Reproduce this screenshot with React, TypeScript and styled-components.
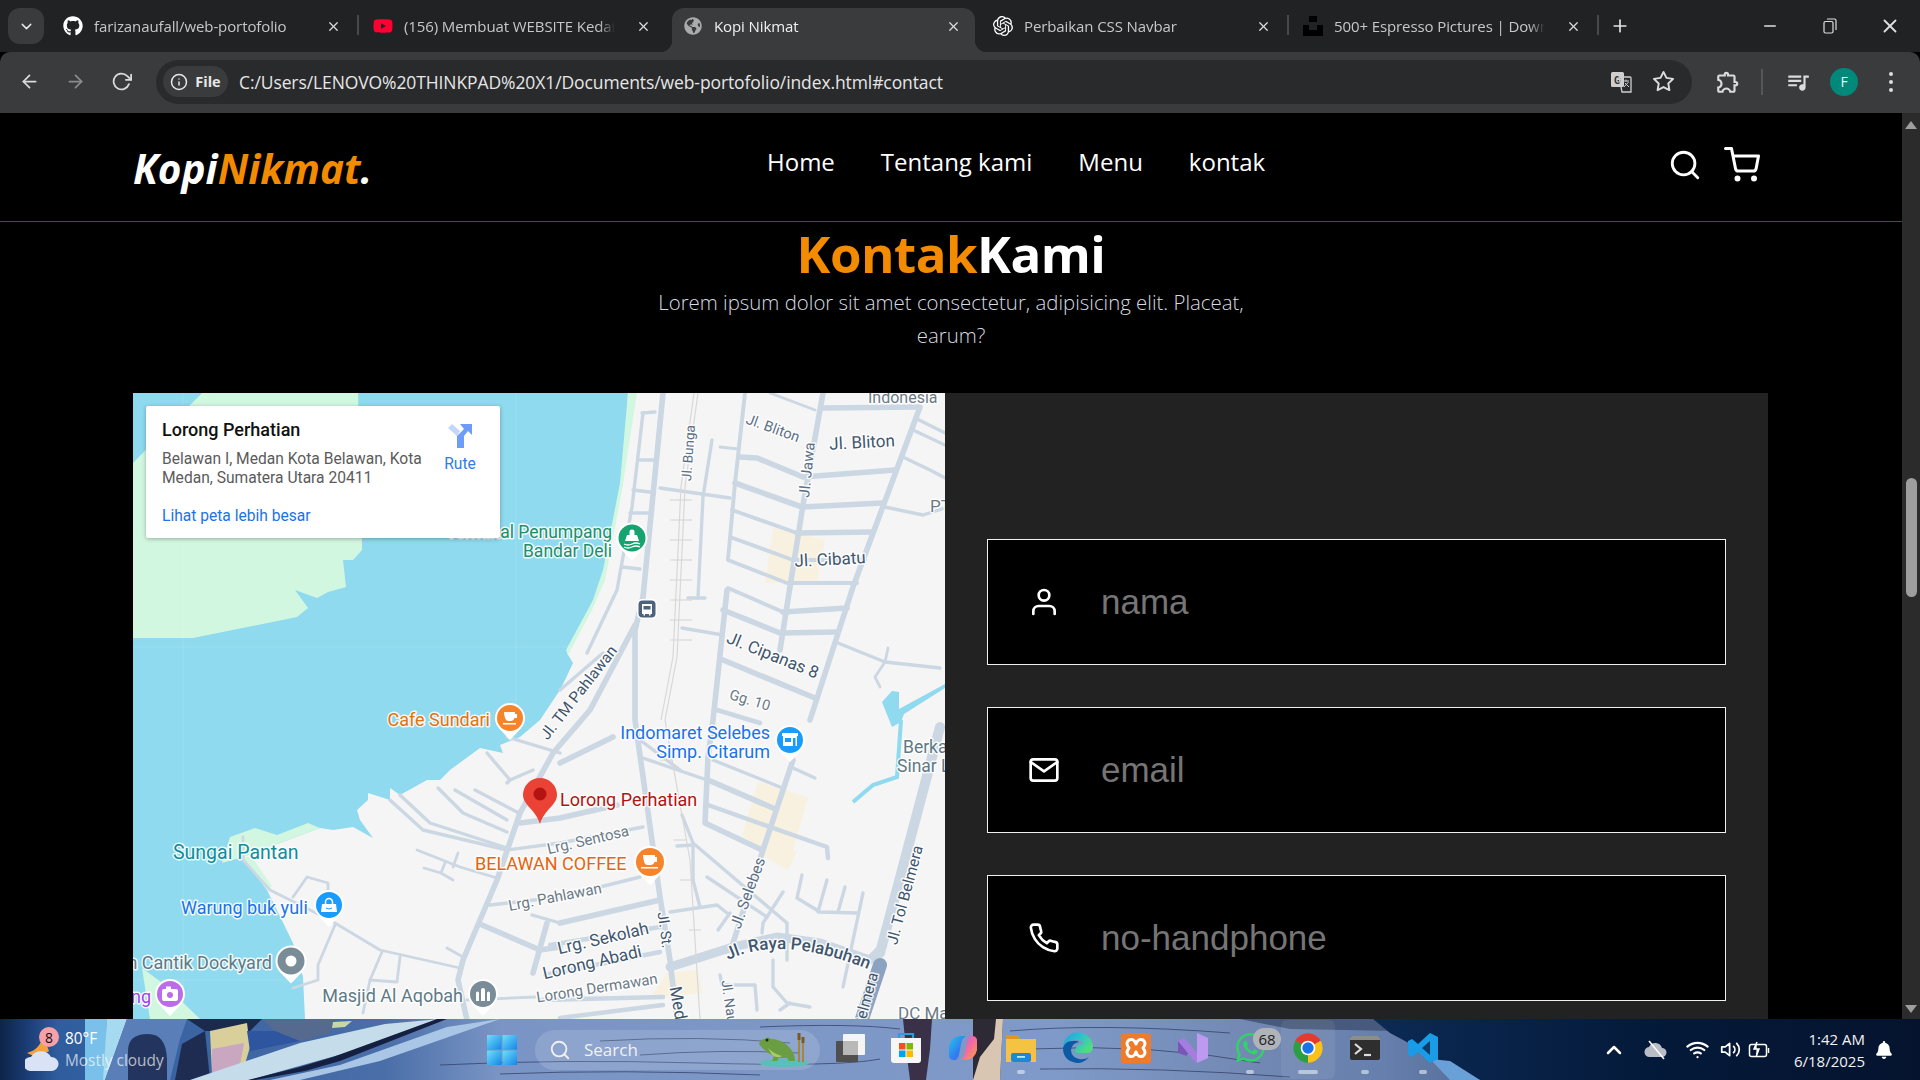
import React from "react";
import styled, { createGlobalStyle } from "styled-components";
import { FiArrowLeft, FiArrowRight, FiRotateCw, FiInfo, FiStar, FiSearch, FiShoppingCart, FiUser, FiMail, FiPhone, FiChevronDown, FiChevronUp, FiWifi, FiVolume2, FiX, FiPlus, FiMinus } from "react-icons/fi";
import { FaGithub, FaYoutube, FaGlobeAmericas, FaWhatsapp, FaBell } from "react-icons/fa";
import { SiOpenai } from "react-icons/si";
import { MdQueueMusic, MdOutlineExtension } from "react-icons/md";

const Global = createGlobalStyle`
  html, body { margin: 0; padding: 0; background: #000; overflow: hidden; }
  * { box-sizing: border-box; }
`;

const Screen = styled.div`
  width: 1920px; height: 1080px; display: flex; flex-direction: column; overflow: hidden;
  font-family: "Open Sans", "Liberation Sans", sans-serif;
`;

/* ---------- browser tab strip ---------- */
const TabStrip = styled.div`
  height: 52px; flex: none; background: #202223; display: flex; align-items: flex-start; padding: 8px 0 0 8px;
`;
const TabSearch = styled.div`
  width: 36px; height: 36px; margin-right: 6px; border-radius: 12px; background: #3a3b3c; color: #e8e8e8;
  display: flex; align-items: center; justify-content: center; font-size: 17px;
`;
const Tab = styled.div<{ $active?: boolean; $sep?: boolean }>`
  position: relative; width: 310px; height: 44px; flex: none; display: flex; align-items: center;
  padding: 0 19px 8px 13px; color: ${p => (p.$active ? "#f0f0f0" : "#c7c7c7")};
  ${p => p.$active && `
    background: #3a3b3c; border-radius: 12px 12px 0 0; width: 303px; margin: 0 5px 0 2px; padding: 0 14px 8px 11px;
    &::before, &::after { content: ""; position: absolute; bottom: 0; width: 12px; height: 12px; }
    &::before { left: -12px; background: radial-gradient(circle at 0 0, #202223 12px, #3a3b3c 12.5px); }
    &::after { right: -12px; background: radial-gradient(circle at 100% 0, #202223 12px, #3a3b3c 12.5px); }
  `}
  ${p => p.$sep && `
    &::after { content: ""; position: absolute; right: 1px; top: 7px; width: 2px; height: 20px; background: #47494a; }
  `}
`;
const TabIcon = styled.span`
  width: 20px; height: 20px; flex: none; display: flex; align-items: center; justify-content: center; margin-right: 11px; font-size: 20px;
`;
const TabTitle = styled.span`
  flex: 1; min-width: 0; overflow: hidden; white-space: nowrap; font-size: 15px; letter-spacing: -0.1px;
  mask-image: linear-gradient(to right, #000 calc(100% - 16px), transparent);
  margin-right: 20px;
`;
const TabClose = styled.span`
  width: 16px; flex: none; display: flex; justify-content: center; font-size: 15px; color: #dcdcdc;
`;
const NewTab = styled.div`
  width: 40px; height: 36px; display: flex; align-items: center; justify-content: center; color: #e4e4e4; font-size: 20px;
`;
const WindowControls = styled.div`
  margin-left: auto; display: flex; align-self: flex-start; color: #dfdfdf; margin-top: 3px;
`;
const WinButton = styled.div`
  width: 60px; height: 30px; display: flex; align-items: center; justify-content: center; font-size: 18px;
`;

/* ---------- browser toolbar ---------- */
const Toolbar = styled.div`
  height: 61px; flex: none; background: #3a3b3c; border-radius: 10px 10px 0 0; display: flex; align-items: center; padding: 0 0 2px 6px;
`;
const NavButton = styled.div<{ $dim?: boolean }>`
  width: 46px; display: flex; justify-content: center; font-size: 21px; color: ${p => (p.$dim ? "#8b8c8d" : "#dadada")};
`;
const Omnibox = styled.div`
  width: 1536px; height: 44px; margin: 0 16px 0 12px; border-radius: 22px; background: #292a2b; display: flex; align-items: center; padding: 0 8px 0 7px;
`;
const Chip = styled.div`
  width: 65px; height: 31px; border-radius: 16px; background: #3a3b3c; display: flex; align-items: center; justify-content: center; gap: 7px; color: #e8e8e8;
  font-size: 14.5px; font-weight: 700;
`;
const Url = styled.div`
  margin-left: 11px; font-size: 17.5px; color: #e6e6e6; white-space: nowrap; flex: 1; letter-spacing: -0.1px;
`;
const ToolIcon = styled.div<{ $w: number; $size?: number }>`
  width: ${p => p.$w}px; flex: none; display: flex; justify-content: center; align-items: center; color: #dcdcdc; font-size: ${p => p.$size ?? 22}px;
`;
const ToolSep = styled.div`
  width: 2px; height: 26px; background: #55575a; flex: none; margin: 0 17px 0 13px;
`;
const Avatar = styled.div`
  width: 28px; height: 28px; border-radius: 50%; background: #00897b; color: #e6f5f3; font-size: 14px; display: flex; align-items: center; justify-content: center;
`;

/* ---------- page ---------- */
const Viewport = styled.div`
  height: 906px; flex: none; display: flex; overflow: hidden;
`;
const Page = styled.div`
  width: 1902px; flex: none; background: #000; overflow: hidden;
`;
const Scrollbar = styled.div`
  flex: 1; background: #2b2b2b; display: flex; flex-direction: column; align-items: center; justify-content: space-between; padding: 8px 0 6px; position: relative;
`;
const Thumb = styled.div`
  position: absolute; top: 365px; left: 4px; width: 11px; height: 119px; border-radius: 6px; background: #9e9e9e;
`;
const Arrow = styled.div<{ $up?: boolean }>`
  width: 0; height: 0; border-left: 6px solid transparent; border-right: 6px solid transparent;
  ${p => (p.$up ? "border-bottom: 8px solid #9e9e9e;" : "border-top: 8px solid #9e9e9e;")}
`;

const Nav = styled.nav`
  height: 109px; border-bottom: 1px solid #6f4504; display: flex; align-items: flex-start; justify-content: space-between; padding: 0 142px 0 133px;
`;
const Logo = styled.div`
  font-size: 40.5px; font-weight: 700; font-style: italic; color: #fff; line-height: 54px; margin: 29px -8px 0 0;
`;
const Orange = styled.span`
  color: #f38b00;
`;
const NavLinks = styled.div`
  display: flex; gap: 46px; margin-top: 32px;
`;
const NavLink = styled.a`
  color: #fff; font-size: 24px; line-height: 34px; font-weight: 500; text-decoration: none;
`;
const NavIcons = styled.div`
  display: flex; align-items: center; gap: 22px; margin-top: 34px; color: #fff; font-size: 36px;
`;

const Heading = styled.h2`
  margin: 0; text-align: center; font-size: 51px; line-height: 62px; font-weight: 700; color: #fff; letter-spacing: -0.5px;
`;
const Subtitle = styled.p`
  margin: 2px auto 0; width: 620px; text-align: center; font-size: 20.4px; line-height: 33px; font-weight: 300; color: #d5dbe0;
`;
const Row = styled.section`
  display: flex; margin: 41px 0 0 133px; width: 1635px; height: 700px;
`;
const MapPane = styled.div`
  position: relative; width: 812px; height: 626px; flex: none; background: #8fdaee; overflow: hidden;
`;
const MapSvg = styled.svg`
  display: block; width: 812px; height: 626px;
`;
const InfoCard = styled.div`
  position: absolute; left: 13px; top: 13px; width: 354px; height: 132px; background: #fff; border-radius: 2px; box-shadow: 0 1px 4px rgba(0,0,0,.3);
  padding: 12px 0 0 16px; font-family: Roboto, "Liberation Sans", sans-serif; display: flex;
`;
const InfoMain = styled.div`
  width: 268px;
`;
const InfoTitle = styled.div`
  font-size: 18px; font-weight: 500; color: #111; line-height: 24px;
`;
const InfoAddress = styled.div`
  margin-top: 8px; font-size: 15.6px; line-height: 19px; color: #5b5b5b;
`;
const InfoLink = styled.a`
  display: block; margin-top: 18px; font-size: 15.6px; line-height: 20px; color: #1a73e8;
`;
const Directions = styled.div`
  display: flex; flex-direction: column; align-items: center; width: 60px; margin-top: 5px; color: #2b7de9; font-size: 15.6px; gap: 6px;
`;
const Panel = styled.div`
  width: 823px; flex: none; background: #222; display: flex; flex-direction: column; gap: 42px; padding: 146px 42px 0;
`;
const InputBox = styled.div`
  height: 126px; flex: none; background: #000; border: 1px solid #f0f0f0; display: flex; align-items: center; padding-left: 40px; color: #fff; font-size: 32px;
`;
const InputIcon = styled.span`
  width: 32px; height: 32px; display: flex; margin-right: 41px;
`;
const Placeholder = styled.span`
  font-family: "Liberation Sans", Arial, sans-serif; font-size: 35px; color: #757575;
`;

const LabelText = styled.text<{ $c: string; $s: number; $w?: number }>`
  font-family: Roboto, "Liberation Sans", sans-serif; fill: ${p => p.$c}; font-size: ${p => p.$s}px; font-weight: ${p => p.$w ?? 400};
  paint-order: stroke; stroke: #fff; stroke-opacity: .85; stroke-width: 3px; stroke-linejoin: round;
`;

/* ---------- taskbar ---------- */
const Taskbar = styled.footer`
  position: relative; height: 61px; flex: none; display: flex; align-items: center; overflow: hidden; color: #fff;
  font-family: "Open Sans", "Liberation Sans", sans-serif;
`;
const Wallpaper = styled.svg`
  position: absolute; inset: 0; width: 1920px; height: 61px;
`;
const Weather = styled.div`
  position: relative; width: 487px; flex: none; height: 100%; display: flex; align-items: center; padding-left: 25px;
`;
const WeatherGlyph = styled.svg`
  width: 38px; height: 44px; flex: none; margin-top: 6px;
`;
const Badge = styled.span<{ $bg: string }>`
  position: absolute; display: flex; align-items: center; justify-content: center; border-radius: 50%; color: #111; background: ${p => p.$bg};
  font-size: 14px; width: 20px; height: 20px;
`;
const WeatherBadge = styled(Badge)`
  left: 39px; top: 8px;
`;
const WeatherText = styled.div`
  margin-left: 2px; font-size: 15.4px; line-height: 22px;
`;
const WeatherSub = styled.div`
  color: rgba(255,255,255,.68);
`;
const Center = styled.div`
  position: relative; display: flex; align-items: center; flex: none;
`;
const StartIcon = styled.svg`
  width: 30px; height: 30px; margin-right: 18px; flex: none;
`;
const SearchPill = styled.div`
  position: relative; width: 285px; height: 40px; flex: none; border-radius: 20px; background: rgba(255,255,255,.14); display: flex; align-items: center; padding-left: 14px; gap: 13px; font-size: 17px; color: #f1f1f1;
`;
const Frog = styled.svg`
  position: absolute; right: 8px; top: 0; width: 54px; height: 40px;
`;
const Slot = styled.div`
  position: relative; width: 57.4px; height: 61px; flex: none; display: flex; align-items: center; justify-content: center;
`;
const SlotIcon = styled.svg`
  width: 32px; height: 32px; position: relative; margin-top: -4px;
`;
const WhatsappWrap = styled.span`
  display: flex; margin-top: -4px;
`;
const RunDot = styled.span<{ $wide?: boolean }>`
  position: absolute; bottom: 6px; left: 50%; transform: translateX(-50%); height: 4px; border-radius: 2px;
  width: ${p => (p.$wide ? 20 : 8)}px; background: rgba(225,235,245,.62);
`;
const ActiveBack = styled.span`
  position: absolute; inset: 1px 2px; border-radius: 6px; background: rgba(255,255,255,.07);
`;
const CountBadge = styled(Badge)`
  right: -2px; top: 9px; width: 28px; height: 22px; border-radius: 11px; font-size: 15px; color: #222;
`;
const Tray = styled.div`
  position: relative; margin-left: auto; display: flex; align-items: center; height: 100%; padding-right: 20px;
`;
const TrayIcon = styled.span<{ $w: number }>`
  width: ${p => p.$w}px; display: flex; justify-content: center; font-size: 21px; color: #fff;
`;
const Clock = styled.div`
  text-align: right; font-size: 15px; line-height: 22px; margin-left: 16px; width: 78px; padding-right: 3px; color: #f2f2f2; white-space: nowrap;
`;

/* ---------- map data ---------- */
const ROADS: [number, string][] = [
  [5, "663,393 643,597 635,630 635,720 660,897 670,960 677,1020"],
  [3, "643,413 632,507 617,590 587,653"],
  [3, "642,413 655,412"], [3, "640,460 653,460"], [3, "633,490 650,492"], [3, "630,513 648,513"], [3, "622,567 640,569"],
  [3, "660,488 730,498"], [3, "712,440 703,497 698,597"], [3, "688,598 705,598"], [2.5, "720,447 738,449"],
  [5, "823,393 803,505 780,650"], [5, "920,407 853,587 810,720"], [5, "823,408 918,407"],
  [5, "740,457 757,458 803,477 895,470"], [5, "735,483 802,507 883,503"],
  [3.5, "745,393 735,483 728,560 787,583 857,583"], [3.5, "732,510 797,533"], [5, "797,533 872,532"], [3.5, "730,537 793,560"], [3.5, "795,560 865,560"],
  [3.5, "728,588 783,612"], [5, "783,612 847,608"], [5, "723,610 780,633 838,632"], [5, "727,590 713,720 708,757 705,823 762,850"], [5, "723,660 815,698"],
  [4, "717,710 760,723"], [3, "682,628 723,635"], [3, "915,418 945,433"], [3, "913,430 945,445"], [3, "905,458 930,470 945,478"],
  [3, "885,507 923,515 945,508"], [3, "838,643 885,662 940,668"], [2.5, "888,648 885,662 875,677 880,687"], [2.5, "770,393 815,410"],
  [9, "940,727 880,953"], [5, "793,760 763,850 733,943"], [5, "560,763 613,737"],
  [5, "708,780 773,808"], [4, "708,805 827,847 828,858"], [3, "640,757 707,780"], [3, "713,760 780,787"], [3, "793,768 815,778"],
  [3, "682,815 693,843 787,923 787,960"], [3, "693,843 693,880 700,907"], [3, "677,846 693,845"], [3, "707,877 767,917"], [3, "783,892 763,923 762,933"],
  [3, "727,913 717,905 670,912"], [3, "730,913 718,930"], [8, "670,967 733,947 777,937 820,943 870,960 880,950"],
  [3, "802,875 797,898 820,912 857,913"], [3, "827,880 818,912"], [3, "845,887 838,912"], [3, "863,893 843,987"],
  [3, "773,960 773,987 787,1003 810,1007"], [3, "780,1010 790,1003"], [3, "720,975 722,985 755,985 757,1010"],
  [5, "520,823 560,818 617,805"], [3, "390,800 423,830 507,850 560,843 643,827"], [3, "400,795 430,823 507,848"], [3, "438,788 463,813 507,832"], [3, "455,790 507,820"], [3, "475,790 517,812"],
  [5, "520,813 553,753 590,710 635,625"], [5, "520,813 497,880 463,960 458,980 467,1020"], [3, "487,753 510,780 507,783"], [3, "510,780 533,770"], [3, "507,737 560,753"], [3, "603,653 560,690"], [3, "640,740 680,770"],
  [5, "482,925 540,950 560,947"], [5, "547,923 533,973"], [3, "532,915 560,923"], [3, "490,905 560,897 640,877"], [5, "560,923 660,900"], [4, "550,945 660,927"], [4, "545,975 660,952"], [4, "540,1000 663,997"], [4, "560,1018 663,1005"],
  [2.5, "243,837 243,860 270,890 330,920 380,950 460,968"], [2.5, "293,897 307,877 328,883 328,890"], [2.5, "335,925 318,965 318,980 293,988"], [2.5, "382,952 370,980 397,982 400,957"],
  [2.5, "417,850 460,867 497,878"], [2.5, "458,853 453,867"], [2.5, "445,863 441,873 424,868"], [2.5, "441,873 453,880"], [2.5, "447,948 463,957"], [2.5, "370,980 363,1013"], [2.5, "467,1000 535,997"],
];

const label = (x: number, y: number, rot = 0) => (rot ? `rotate(${rot} ${x} ${y})` : undefined);
const ROAD_DARK = "#3f566e";
const ROAD_MID = "#5c6f85";
const ROAD_GRAY = "#6b7a86";

const MapPin = ({ x, y, c, r = 13, children }: { x: number; y: number; c: string; r?: number; children?: React.ReactNode }) => (
  <g>
    <circle cx={x} cy={y} r={r + 2} fill="#fff" />
    <path d={`M${x - r * 0.8} ${y + r * 0.75} L${x} ${y + r + 8} L${x + r * 0.8} ${y + r * 0.75}Z`} fill="#fff" stroke="#fff" strokeLinejoin="round" strokeWidth="1.5" />
    <circle cx={x} cy={y} r={r} fill={c} />
    {children}
  </g>
);

const MapArt = () => (
  <MapSvg viewBox="133 393 812 626">
    <rect x="133" y="393" width="812" height="626" fill="#8fdaee" />
    <polygon fill="#d2f7e1" points="202,393 358,393 362,540 362,550 353,560 343,560 346,587 328,592 317,598 295,590 308,608 297,617 193,638 133,638 133,463" />
    <polygon fill="#f5f5f5" points="628,393 945,393 945,1019 305,1019 303,977 293,943 267,890 243,857 320,828 333,830 353,827 373,838 360,820 357,810 368,800 368,793 390,800 390,788 400,795 427,780 440,780 450,770 480,748 503,753 500,745 520,737 540,720 560,690 565,680 573,663 567,653 593,603 603,573 623,483" />
    <polygon fill="#d2f7e1" points="628,393 637,393 622,490 605,580 592,610 568,655 566,650 593,600 603,570 620,483" />
    <polygon fill="#d2f7e1" points="230,837 222,863 243,857 320,828 308,823 277,835 255,828" />
    <polygon fill="#d2f7e1" points="243,857 252,857 272,886 267,890" />
    <polygon fill="#d2f7e1" points="142,968 165,985 200,1019 150,1019" />
    <polygon fill="#f8f1e0" points="773,528 825,540 817,582 765,583" />
    <polygon fill="#f8f1e0" points="758,782 808,797 793,850 797,852 788,870 770,860 742,835" />
    <polygon fill="#f8f1e0" points="650,998 667,973 698,970 702,993" />
    <g stroke="#fff" strokeOpacity=".13" strokeWidth="1">
      <line x1="183" y1="393" x2="183" y2="1019" /><line x1="516" y1="393" x2="516" y2="1019" /><line x1="849" y1="393" x2="849" y2="1019" />
      <line x1="133" y1="647" x2="945" y2="647" /><line x1="133" y1="980" x2="945" y2="980" />
    </g>
    <polygon fill="#8fdaee" points="882,702 892,691 899,692 899,709 945,684 945,688 904,714 901,722 892,727" />
    <polyline fill="none" stroke="#8fdaee" strokeWidth="4" points="901,720 897,777 873,785 853,802" />
    <g fill="none" stroke="#cbd7e2" strokeLinejoin="round" strokeLinecap="round">
      {ROADS.map(([w, p], i) => <polyline key={i} strokeWidth={w * 1.12} points={p} />)}
    </g>
    <g fill="none" stroke="#d8d8d8" strokeWidth="1.2">
      <polyline points="698,393 685,487 677,657 665,720 690,860 700,1019" />
      <polyline points="694,393 681,487 673,657 661,720" />
      {[500, 520, 540, 560, 580, 600, 620, 640].map(y => <line key={y} x1={670} y1={y} x2={692} y2={y} />)}
      {[760, 800, 840, 880, 930].map(y => <line key={y} x1={660 + (y - 760) * .17} y1={y} x2={672 + (y - 760) * .17} y2={y} />)}
    </g>
    <polyline fill="none" stroke="#8ba3c0" strokeWidth="14" strokeLinecap="round" points="880,965 860,1025" />

    <LabelText $c={ROAD_GRAY} $s={16} x="868" y="403">Indonesia</LabelText>
    <LabelText $c={ROAD_MID} $s={14.5} x="773" y="433" textAnchor="middle" transform={label(773, 428, 20)}>Jl. Bliton</LabelText>
    <LabelText $c={ROAD_DARK} $s={17} x="862" y="448" textAnchor="middle" transform={label(862, 442, -3)}>Jl. Bliton</LabelText>
    <LabelText $c={ROAD_MID} $s={15} x="807" y="475" textAnchor="middle" transform={label(807, 470, -84)}>Jl. Jawa</LabelText>
    <LabelText $c={ROAD_MID} $s={13.5} x="688" y="458" textAnchor="middle" transform={label(688, 453, -86)}>Jl. Bunga</LabelText>
    <LabelText $c={ROAD_DARK} $s={17} x="830" y="565" textAnchor="middle" transform={label(830, 559, -3)}>Jl. Cibatu</LabelText>
    <LabelText $c={ROAD_DARK} $s={17} x="773" y="661" textAnchor="middle" transform={label(773, 655, 22)}>Jl. Cipanas 8</LabelText>
    <LabelText $c={ROAD_GRAY} $s={14.5} x="750" y="705" textAnchor="middle" transform={label(750, 700, 17)}>Gg. 10</LabelText>
    <LabelText $c={ROAD_GRAY} $s={17} x="930" y="512">PT</LabelText>
    <LabelText $c={ROAD_DARK} $s={15.5} x="578" y="698" textAnchor="middle" transform={label(578, 692, -52)}>Jl. TM Pahlawan</LabelText>
    <LabelText $c="#1c8f6b" $s={17.5} x="612" y="538" textAnchor="end">Terminal Penumpang</LabelText>
    <LabelText $c="#1c8f6b" $s={17.5} x="612" y="557" textAnchor="end">Bandar Deli</LabelText>
    <LabelText $c="#e8710a" $s={18} x="490" y="726" textAnchor="end">Cafe Sundari</LabelText>
    <LabelText $c="#b31412" $s={18} x="560" y="806">Lorong Perhatian</LabelText>
    <LabelText $c="#1a73e8" $s={18} x="770" y="739" textAnchor="end">Indomaret Selebes</LabelText>
    <LabelText $c="#1a73e8" $s={18} x="770" y="758" textAnchor="end">Simp. Citarum</LabelText>
    <LabelText $c="#5f7a85" $s={17.5} x="903" y="753">Berkah</LabelText>
    <LabelText $c="#5f7a85" $s={17.5} x="897" y="772">Sinar Logam</LabelText>
    <LabelText $c={ROAD_GRAY} $s={15} x="588" y="845" textAnchor="middle" transform={label(588, 840, -13)}>Lrg. Sentosa</LabelText>
    <LabelText $c="#e8640a" $s={18} x="475" y="870">BELAWAN COFFEE</LabelText>
    <LabelText $c={ROAD_GRAY} $s={15} x="555" y="902" textAnchor="middle" transform={label(555, 897, -11)}>Lrg. Pahlawan</LabelText>
    <LabelText $c={ROAD_DARK} $s={17} x="603" y="944" textAnchor="middle" transform={label(603, 938, -13)}>Lrg. Sekolah</LabelText>
    <LabelText $c={ROAD_DARK} $s={17} x="592" y="968" textAnchor="middle" transform={label(592, 962, -13)}>Lorong Abadi</LabelText>
    <LabelText $c={ROAD_GRAY} $s={15} x="597" y="993" textAnchor="middle" transform={label(597, 988, -9)}>Lorong Dermawan</LabelText>
    <LabelText $c={ROAD_DARK} $s={14.5} x="665" y="935" textAnchor="middle" transform={label(665, 930, 82)}>Jl. St.</LabelText>
    <LabelText $c={ROAD_DARK} $s={17} x="680" y="1018" textAnchor="middle" transform={label(680, 1012, 80)}>Medan</LabelText>
    <LabelText $c={ROAD_MID} $s={15.5} x="748" y="898" textAnchor="middle" transform={label(748, 893, -70)}>Jl. Selebes</LabelText>
    <path id="raya-path" d="M728 960 Q782 933 875 972" fill="none" />
    <LabelText $c={ROAD_DARK} $s={17} $w={500}><textPath href="#raya-path">Jl. Raya Pelabuhan</textPath></LabelText>
    <LabelText $c={ROAD_DARK} $s={15.5} x="905" y="900" textAnchor="middle" transform={label(905, 895, -75)}>Jl. Tol Belmera</LabelText>
    <LabelText $c={ROAD_DARK} $s={15.5} x="865" y="1006" textAnchor="middle" transform={label(865, 1000, -75)}>Belmera</LabelText>
    <LabelText $c={ROAD_MID} $s={14} x="730" y="1010" textAnchor="middle" transform={label(730, 1005, 82)}>Jl. Nauli</LabelText>
    <LabelText $c={ROAD_GRAY} $s={17} x="898" y="1019">DC Mall</LabelText>
    <LabelText $c="#0d8e9c" $s={19.5} x="173" y="859">Sungai Pantan</LabelText>
    <LabelText $c="#1a73e8" $s={18} x="181" y="914">Warung buk yuli</LabelText>
    <LabelText $c="#5f7a85" $s={18} x="272" y="969" textAnchor="end">Pelabuhan Cantik Dockyard</LabelText>
    <LabelText $c="#a142f4" $s={18} x="151" y="1003" textAnchor="end">Mancing</LabelText>
    <LabelText $c="#5f7a85" $s={18} x="463" y="1002" textAnchor="end">Masjid Al Aqobah</LabelText>

    <MapPin x={632} y={538} c="#15a36f" r={13.5}>
      <path d="M625 541 l2 -6 h2.5 v-3 a2.5 2.5 0 0 1 5 0 v3 h2.5 l2 6z" fill="#fff" />
      <path d="M624 544 q4 2 8 0 t8 0 M624 547 q4 2 8 0 t8 0" stroke="#fff" strokeWidth="1.3" fill="none" />
    </MapPin>
    <rect x="637" y="599" width="20" height="20" rx="5" fill="#fff" />
    <rect x="638.500" y="600.500" width="17" height="17" rx="4" fill="#4d627c" />
    <path d="M642 604 h10 v10 h-1.500 v1.500 h-1.500 v-1.500 h-4 v1.500 h-1.500 v-1.500 h-1.500z" fill="#fff" />
    <rect x="643.500" y="606" width="7" height="3.500" fill="#4d627c" />
    <MapPin x={510} y={718} c="#f5842b" r={13}>
      <path d="M504 712 h11 v2 h2 v4 h-2.5 q-1 3 -4 3 h-2 q-4 0 -4.500 -9z M503 723 h13 v1.500 h-13z" fill="#fff" />
    </MapPin>
    <MapPin x={790} y={740} c="#1a9cff" r={13}>
      <path d="M782 733 h16 v3 h-1 v10 h-14 v-10 h-1z" fill="#fff" />
      <rect x="785" y="738" width="6" height="4" fill="#1a9cff" />
      <rect x="793" y="738" width="2.500" height="8" fill="#1a9cff" />
    </MapPin>
    <path d="M540 824 C536 810 523 805 523 795 a17 17 0 0 1 34 0 C557 805 544 810 540 824z" fill="#ea4335" />
    <circle cx="540" cy="794" r="6.500" fill="#b31412" />
    <MapPin x={650} y={862} c="#f5842b" r={14}>
      <path d="M643 855 h12 v2 h2 v5 h-2.500 q-1 3 -4 3 h-3 q-4 0 -4.500 -10z M641 867 h17 v1.500 h-17z" fill="#fff" />
    </MapPin>
    <MapPin x={329} y={905} c="#1a9cff" r={13}>
      <path d="M322 904 h14 l1 8 h-16z" fill="#fff" />
      <path d="M325.500 904 v-2 a3.500 3.500 0 0 1 7 0 v2" stroke="#fff" strokeWidth="1.500" fill="none" />
      <path d="M326 908 q3 2 6 0" stroke="#1a9cff" fill="none" />
    </MapPin>
    <MapPin x={291} y={961} c="#7a8c98" r={13.5}>
      <circle cx="291" cy="961" r="5.500" fill="#fff" />
    </MapPin>
    <MapPin x={170} y={994} c="#b96ee8" r={13}>
      <rect x="162" y="989" width="16" height="12" rx="2" fill="#fff" />
      <rect x="166" y="986.500" width="5" height="3" fill="#fff" />
      <circle cx="170" cy="995" r="3" fill="#b96ee8" />
    </MapPin>
    <MapPin x={483} y={994} c="#7a8c98" r={13}>
      <path d="M476 1001 v-8 a1.500 1.500 0 0 1 3 0 v8z M481 1001 v-11 a2 2 0 0 1 4 0 v11z M487 1001 v-8 a1.500 1.500 0 0 1 3 0 v8z" fill="#fff" />
    </MapPin>
  </MapSvg>
);

const ChromeIcon = () => (
  <SlotIcon viewBox="0 0 48 48">
    <path d="M24 24 L6.680 14 A20 20 0 0 1 41.320 14Z" fill="#e33b2e" transform="translate(-2.400 -2.400) scale(1.100)" />
    <path d="M24 24 L41.320 14 A20 20 0 0 1 24 44Z" fill="#fbc116" transform="translate(-2.400 -2.400) scale(1.100)" />
    <path d="M24 24 L24 44 A20 20 0 0 1 6.680 14Z" fill="#2c9f45" transform="translate(-2.400 -2.400) scale(1.100)" />
    <circle cx="24" cy="24" r="11" fill="#fff" /><circle cx="24" cy="24" r="8.500" fill="#1a73e8" />
  </SlotIcon>
);

export default function App() {
  return (
    <Screen>
      <Global />
      <TabStrip>
        <TabSearch><FiChevronDown /></TabSearch>
        <Tab $sep><TabIcon><FaGithub color="#fff" /></TabIcon><TabTitle>farizanaufall/web-portofolio</TabTitle><TabClose><FiX /></TabClose></Tab>
        <Tab><TabIcon><FaYoutube color="#ff0033" /></TabIcon><TabTitle>(156) Membuat WEBSITE Kedai Kopi</TabTitle><TabClose><FiX /></TabClose></Tab>
        <Tab $active><TabIcon><FaGlobeAmericas color="#a9abad" size={18} /></TabIcon><TabTitle>Kopi Nikmat</TabTitle><TabClose><FiX /></TabClose></Tab>
        <Tab $sep><TabIcon><SiOpenai color="#fff" /></TabIcon><TabTitle>Perbaikan CSS Navbar</TabTitle><TabClose><FiX /></TabClose></Tab>
        <Tab $sep><TabIcon><svg width="20" height="20" viewBox="0 0 20 20"><path d="M6 0h8v6H6zM0 9h6v5h8V9h6v11H0z" fill="#000" /></svg></TabIcon><TabTitle>500+ Espresso Pictures | Download Free</TabTitle><TabClose><FiX /></TabClose></Tab>
        <NewTab><FiPlus /></NewTab>
        <WindowControls>
          <WinButton><FiMinus /></WinButton>
          <WinButton><svg width="14" height="16" viewBox="0 0 14 16" fill="none" stroke="#dfdfdf" strokeWidth="1.200"><rect x="1" y="3.500" width="9" height="11.500" rx="1.500" /><path d="M4 1h7.500a1.500 1.500 0 0 1 1.500 1.500V12" /></svg></WinButton>
          <WinButton><FiX size={22} /></WinButton>
        </WindowControls>
      </TabStrip>
      <Toolbar>
        <NavButton><FiArrowLeft /></NavButton>
        <NavButton $dim><FiArrowRight /></NavButton>
        <NavButton><FiRotateCw /></NavButton>
        <Omnibox>
          <Chip><FiInfo size={18} />File</Chip>
          <Url>C:/Users/LENOVO%20THINKPAD%20X1/Documents/web-portofolio/index.html#contact</Url>
          <ToolIcon $w={42}>
            <svg width="22" height="22" viewBox="0 0 22 22"><rect x="1" y="1" width="13" height="15" rx="1.500" fill="#cfcfcf" /><text x="4" y="12.500" fontSize="10" fontWeight="700" fill="#333" fontFamily="Roboto, sans-serif">G</text><path d="M9 6h11a1 1 0 0 1 1 1v14H12z" fill="none" stroke="#cfcfcf" strokeWidth="1.300" /><path d="M13 10h6M16 8.500v2M14 16l4.500-5M15 12l4 4" stroke="#cfcfcf" strokeWidth="1" /></svg>
          </ToolIcon>
          <ToolIcon $w={42} $size={23}><FiStar /></ToolIcon>
        </Omnibox>
        <ToolIcon $w={40} $size={26}><MdOutlineExtension /></ToolIcon>
        <ToolSep />
        <ToolIcon $w={36} $size={26}><MdQueueMusic /></ToolIcon>
        <ToolIcon $w={56}><Avatar>F</Avatar></ToolIcon>
        <ToolIcon $w={38} $size={24}><svg width="6" height="22" viewBox="0 0 6 22" fill="#dcdcdc"><circle cx="3" cy="3" r="2" /><circle cx="3" cy="11" r="2" /><circle cx="3" cy="19" r="2" /></svg></ToolIcon>
      </Toolbar>
      <Viewport>
        <Page>
          <Nav>
            <Logo>Kopi<Orange>Nikmat</Orange>.</Logo>
            <NavLinks>
              <NavLink>Home</NavLink>
              <NavLink>Tentang kami</NavLink>
              <NavLink>Menu</NavLink>
              <NavLink>kontak</NavLink>
            </NavLinks>
            <NavIcons><FiSearch size={34} /><FiShoppingCart /></NavIcons>
          </Nav>
          <Heading><Orange>Kontak</Orange>Kami</Heading>
          <Subtitle>Lorem ipsum dolor sit amet consectetur, adipisicing elit. Placeat, earum?</Subtitle>
          <Row>
            <MapPane>
              <MapArt />
              <InfoCard>
                <InfoMain>
                  <InfoTitle>Lorong Perhatian</InfoTitle>
                  <InfoAddress>Belawan I, Medan Kota Belawan, Kota Medan, Sumatera Utara 20411</InfoAddress>
                  <InfoLink>Lihat peta lebih besar</InfoLink>
                </InfoMain>
                <Directions>
                  <svg width="24" height="26" viewBox="0 0 24 26"><path d="M0 5L4 1l8 7-3 5z" fill="#c4d7fb" /><path d="M9 25V13l7-7-4-5h12v11l-4-4-4 5v12z" fill="#6f9cf6" /></svg>
                  Rute
                </Directions>
              </InfoCard>
            </MapPane>
            <Panel>
              <InputBox><InputIcon><FiUser /></InputIcon><Placeholder>nama</Placeholder></InputBox>
              <InputBox><InputIcon><FiMail /></InputIcon><Placeholder>email</Placeholder></InputBox>
              <InputBox><InputIcon><FiPhone /></InputIcon><Placeholder>no-handphone</Placeholder></InputBox>
            </Panel>
          </Row>
        </Page>
        <Scrollbar><Arrow $up /><Thumb /><Arrow /></Scrollbar>
      </Viewport>
      <Taskbar>
        <Wallpaper viewBox="0 0 1920 61" preserveAspectRatio="none">
          <defs>
            <linearGradient id="wall" x1="0" x2="1" y1="0" y2="0">
              <stop offset="0" stopColor="#0d2448" /><stop offset=".013" stopColor="#1a3a72" /><stop offset=".03" stopColor="#2f5d9e" /><stop offset=".2" stopColor="#4a6ea8" /><stop offset=".26" stopColor="#7a95c5" />
              <stop offset=".55" stopColor="#7f9ac8" /><stop offset=".65" stopColor="#7389b4" /><stop offset=".72" stopColor="#667fac" /><stop offset="1" stopColor="#0a1d3f" />
            </linearGradient>
            <linearGradient id="navy" x1="0" x2="1" y1="0" y2="0">
              <stop offset="0" stopColor="#0c2a55" /><stop offset=".5" stopColor="#041a3a" /><stop offset="1" stopColor="#05132e" />
            </linearGradient>
          </defs>
          <rect width="1920" height="61" fill="url(#wall)" />
          {/* left stained glass */}
          <polygon points="85,0 107,0 105,61 85,61" fill="#79c0ea" />
          <polygon points="107,0 127,0 105,61 103,61" fill="#a5daf0" />
          <polygon points="127,0 187,0 180,20 170,61 105,61" fill="#5a7fb8" />
          <path d="M128 61 V32 Q128 15 148 15 Q166 15 167 40 V61z" fill="#23355e" />
          <polygon points="175,61 182,25 205,12 210,61" fill="#1d2c50" />
          <polygon points="187,0 262,0 250,12 205,12" fill="#1b2a4c" />
          <polygon points="210,12 247,4 250,28 245,45 212,55" fill="#d9cf9a" />
          <polygon points="212,30 244,24 240,46 212,55" fill="#c9a7c0" />
          <polygon points="247,12 300,12 300,22 250,32" fill="#2e55a0" />
          <polygon points="262,0 335,0 330,14 300,22 275,12" fill="#566a90" />
          <polygon points="333,3 352,2 345,8 332,9" fill="#c7d8a0" />
          {/* diagonal bands */}
          <polygon points="190,61 300,24 385,5 440,0 360,30 250,61" fill="#c5dcea" />
          <polygon points="437,0 447,0 340,42 305,52 255,61 248,61 300,48 333,38" fill="#152040" />
          <polygon points="447,8 500,0 380,42 300,61 270,61 340,46" fill="#a9c6e6" />
          {/* figure strip */}
          <polygon points="903,0 932,0 930,30 926,61 910,61 906,30" fill="#3a3048" />
          <polygon points="973,0 1003,0 1000,61 973,61" fill="#2e2a35" />
          <polygon points="996,0 1003,0 1000,61 973,61 980,38 994,20" fill="#d9c6b2" />
          {/* right dark wave */}
          <polygon points="1240,0 1373,0 1400,12 1290,10" fill="#47597c" />
          <polygon points="1373,0 1920,0 1920,61 1480,61 1455,50 1420,30 1390,14" fill="url(#navy)" />
          <polygon points="1430,40 1450,42 1480,61 1450,61" fill="#6aa0d8" />
          <g stroke="#2b3a5e" strokeWidth="1" fill="none" opacity=".7">
            <path d="M440 46 Q560 40 700 44 T880 40" /><path d="M500 55 Q620 50 760 56" /><path d="M600 22 Q700 16 790 24" /><path d="M1030 30 Q1150 24 1260 44" /><path d="M1040 50 Q1160 48 1290 58" /><path d="M760 8 Q850 4 900 10" /><path d="M1010 12 Q1100 4 1230 14" /><path d="M640 36 Q720 30 800 34" />
          </g>
        </Wallpaper>
        <Weather>
          <WeatherGlyph viewBox="0 0 38 44">
            <path d="M18 4 q-2 14 -16 18 q10 6 22 -2z" fill="#f2a33c" />
            <path d="M5 40 a7 7 0 0 1 1-14 a11 10 0 0 1 20 0 a7 7 0 0 1 1 14z" fill="#d9e2f6" />
          </WeatherGlyph>
          <WeatherBadge $bg="#f8a0a8">8</WeatherBadge>
          <WeatherText>80°F<WeatherSub>Mostly cloudy</WeatherSub></WeatherText>
        </Weather>
        <Center>
          <StartIcon viewBox="0 0 30 30">
            <defs><linearGradient id="win" x1="0" y1="0" x2="1" y2="1"><stop offset="0" stopColor="#6fe0f8" /><stop offset="1" stopColor="#1585e8" /></linearGradient></defs>
            <rect width="14.500" height="14.500" fill="url(#win)" /><rect x="15.500" width="14.500" height="14.500" fill="url(#win)" /><rect y="15.500" width="14.500" height="14.500" fill="url(#win)" /><rect x="15.500" y="15.500" width="14.500" height="14.500" fill="url(#win)" />
          </StartIcon>
          <SearchPill>
            <FiSearch size={22} />
            Search
            <Frog viewBox="0 0 54 40">
              <ellipse cx="26" cy="33" rx="25" ry="4" fill="#58c0b8" />
              <path d="M1 14 q2-5 6-5 q3-3 6 0 q10 0 18 8 q6 6 6 14 h-6 l-2-3 h-8 l-2 3 h-5 l2-5 q-8-3-15-12z" fill="#6b9e42" />
              <path d="M10 18 q6 6 14 8 q-4 3-10-1z" fill="#a8cc66" />
              <circle cx="9" cy="10" r="1.500" fill="#1c2a12" />
              <path d="M41 3v29M45 7v25" stroke="#a9853c" strokeWidth="2" />
              <path d="M41 3v7M45 7v6" stroke="#7a5a22" strokeWidth="3" />
            </Frog>
          </SearchPill>
          <Slot><SlotIcon viewBox="0 0 32 32"><rect x="10" y="2" width="22" height="21" rx="1" fill="#f4f4f4" /><rect x="3" y="9" width="22" height="21" rx="1" fill="#4f4f4f" /><rect x="10" y="9" width="15" height="14" fill="#b8b8b8" /></SlotIcon></Slot>
          <Slot><SlotIcon viewBox="0 0 32 32"><path d="M1 6h30v22a3 3 0 0 1-3 3H4a3 3 0 0 1-3-3z" fill="#f7f7f7" /><path d="M9 6V2h14v4" fill="none" stroke="#28a0d8" strokeWidth="2.200" /><rect x="9" y="11" width="6.500" height="6.500" fill="#f25022" /><rect x="16.500" y="11" width="6.500" height="6.500" fill="#7fba00" /><rect x="9" y="18.500" width="6.500" height="6.500" fill="#00a4ef" /><rect x="16.500" y="18.500" width="6.500" height="6.500" fill="#ffb900" /></SlotIcon></Slot>
          <Slot><SlotIcon viewBox="0 0 32 32"><defs><linearGradient id="copA" x1="0" y1="0" x2="1" y2="1"><stop offset="0" stopColor="#27c4e8" /><stop offset=".6" stopColor="#2f7cf0" /><stop offset="1" stopColor="#8a5cf0" /></linearGradient><linearGradient id="copB" x1="0" y1="0" x2="1" y2="1"><stop offset="0" stopColor="#a56bf0" /><stop offset=".5" stopColor="#f46aa0" /><stop offset="1" stopColor="#f9a33c" /></linearGradient></defs><path d="M2 14 q2-9 11-10 h6 q-4 2-5 8 l-2 11 q-1 6-6 5 q-5-1-4-7z" fill="url(#copA)" /><path d="M30 18 q-2 9-11 10 h-6 q4-2 5-8 l2-11 q1-6 6-5 q5 1 4 7z" fill="url(#copB)" /></SlotIcon></Slot>
          <Slot><SlotIcon viewBox="0 0 32 32"><path d="M1 3h11l3 4h16v23H1z" fill="#f5c342" /><path d="M1 3h11l3 4H1z" fill="#d99a1a" /><rect x="6" y="21" width="20" height="9" rx="2" fill="#1e88d8" /><rect x="12" y="24" width="8" height="1.800" fill="#bfe3fa" /></SlotIcon><RunDot /></Slot>
          <Slot><SlotIcon viewBox="0 0 32 32"><defs><linearGradient id="edge" x1="0" y1="0" x2="1" y2=".6"><stop offset="0" stopColor="#1e9fe0" /><stop offset=".55" stopColor="#2ec4c8" /><stop offset="1" stopColor="#52dc80" /></linearGradient></defs><path d="M1 16 A15 15 0 0 1 31 15 q0 6-7 6 h-7 q-4 0-4-3 q2-7 9-6 q-4-6-11-4 Q3 10 1 16z" fill="url(#edge)" /><path d="M1 16 Q3 9 10 9 Q15 8 17 10 Q10 11 9 18 Q9 25 17 27 Q23 28 27 25 Q22 31 15 31 Q1 29 1 16z" fill="#0c59a4" /></SlotIcon></Slot>
          <Slot><SlotIcon viewBox="0 0 32 32"><rect x="1" y="1" width="30" height="30" rx="2" fill="#ee7a2c" /><path d="M9 8 q5-2 7 4 q2-6 7-4 q4 3 0 8 q4 5 0 8 q-5 2-7-4 q-2 6-7 4 q-4-3 0-8 q-4-5 0-8z" fill="none" stroke="#fff" strokeWidth="3" strokeLinejoin="round" /></SlotIcon></Slot>
          <Slot><SlotIcon viewBox="0 0 32 32"><path d="M1 9 L10 15 V24 L1 21z" fill="#7a55b8" /><path d="M1 9 L7 6 L24 25 L19 31 L10 20z" fill="#a57de0" /><path d="M20 1 L31 6 V26 L20 31z" fill="#bd9af0" /></SlotIcon></Slot>
          <Slot><WhatsappWrap><FaWhatsapp size={33} color="#2fd366" /></WhatsappWrap><CountBadge $bg="#b0b4b8">68</CountBadge><RunDot /></Slot>
          <Slot><ActiveBack /><ChromeIcon /><RunDot $wide /></Slot>
          <Slot><SlotIcon viewBox="0 0 32 32"><rect x="1" y="4" width="30" height="24" rx="2" fill="#2e2e2e" /><path d="M1 6a2 2 0 0 1 2-2h26a2 2 0 0 1 2 2v2H1z" fill="#8d8d8d" /><path d="M6 12l6 5-6 5" stroke="#ddd" strokeWidth="2.200" fill="none" /><path d="M15 23h7" stroke="#ddd" strokeWidth="2.200" /></SlotIcon><RunDot /></Slot>
          <Slot><SlotIcon viewBox="0 0 32 32"><path d="M23 1 L31 5 V27 L23 31 L11 20 L5 25 L1 23 V9 L5 7 L11 12z" fill="#1a9be6" /><path d="M23 9 L15 16 L23 23z" fill="#0d3a66" /></SlotIcon><RunDot /></Slot>
        </Center>
        <Tray>
          <TrayIcon $w={40}><FiChevronUp size={24} strokeWidth={2.500} /></TrayIcon>
          <TrayIcon $w={44}><svg width="24" height="22" viewBox="0 0 24 22"><path d="M6 18 a5 5 0 0 1-1-10 a7 7 0 0 1 13 1 a4.500 4.500 0 0 1 0 9z" fill="#b8bdc6" /><path d="M5 2l15 18" stroke="#fff" strokeWidth="1.500" /></svg></TrayIcon>
          <TrayIcon $w={38}><FiWifi size={23} strokeWidth={2.300} /></TrayIcon>
          <TrayIcon $w={28}><FiVolume2 /></TrayIcon>
          <TrayIcon $w={30}><svg width="22" height="18" viewBox="0 0 22 18" fill="none" stroke="#fff" strokeWidth="1.500"><rect x="1.500" y="3.500" width="17" height="12" rx="2" /><path d="M20.500 7v5" /><path d="M9 1L6 8h5l-3 8" fill="#fff" /></svg></TrayIcon>
          <Clock>1:42 AM<br />6/18/2025</Clock>
          <TrayIcon $w={32}><FaBell size={18} /></TrayIcon>
        </Tray>
      </Taskbar>
    </Screen>
  );
}
